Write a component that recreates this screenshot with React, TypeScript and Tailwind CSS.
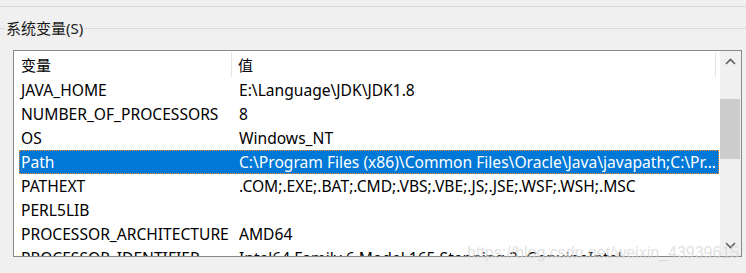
import { ReactNode } from 'react'

const rows: { name: string; value: string }[] = [
  { name: 'JAVA_HOME', value: 'E:\\Language\\JDK\\JDK1.8' },
  { name: 'NUMBER_OF_PROCESSORS', value: '8' },
  { name: 'OS', value: 'Windows_NT' },
  { name: 'Path', value: 'C:\\Program Files (x86)\\Common Files\\Oracle\\Java\\javapath;C:\\Pr...' },
  { name: 'PATHEXT', value: '.COM;.EXE;.BAT;.CMD;.VBS;.VBE;.JS;.JSE;.WSF;.WSH;.MSC' },
  { name: 'PERL5LIB', value: '' },
  { name: 'PROCESSOR_ARCHITECTURE', value: 'AMD64' },
  { name: 'PROCESSOR_IDENTIFIER', value: 'Intel64 Family 6 Model 165 Stepping 2, GenuineIntel' },
]

function Chevron({ down }: { down?: boolean }) {
  return (
    <svg width="11" height="7" viewBox="0 0 11 7" className="block">
      <polyline
        points={down ? '1,1 5.5,5.5 10,1' : '1,6 5.5,1.5 10,6'}
        fill="none"
        stroke="#606060"
        strokeWidth="1.6"
      />
    </svg>
  )
}

function Row({ name, value, selected }: { name: string; value: string; selected?: boolean }) {
  return (
    <div
      className={
        'flex h-[24px] shrink-0 items-center whitespace-nowrap text-[15.6px] leading-[20px] ' +
        (selected ? 'border border-dotted border-[#ff8728] bg-[#0078d7] text-white' : 'border border-transparent text-black')
      }
    >
      <div className="w-[219px] shrink-0 pl-[1px]">{name}</div>
      <div className="min-w-0 flex-1 overflow-hidden">{value}</div>
    </div>
  )
}

function ListHeader({ children }: { children: ReactNode }) {
  return <div className="flex h-[27px] shrink-0 items-center leading-[20px]">{children}</div>
}

export default function App() {
  return (
    <div
      className="relative h-[273px] w-[746px] overflow-hidden bg-[#f0f0f0] text-[15px] leading-none"
      style={{ fontFamily: '"Noto Sans", "Noto Sans CJK SC", sans-serif' }}
    >
      <div className="h-[6px]" />
      <div className="h-px bg-[#dadada]" />
      <div className="mt-[12px] flex h-[19px] items-center">
        <div className="h-px w-[5px] bg-[#dadada]" />
        <div className="px-[1px] leading-[19px] text-[#1a1a1a]">系统变量(S)</div>
        <div className="h-px flex-1 bg-[#dadada]" />
      </div>

      <div className="ml-[13px] mt-[12px] flex h-[207px] w-[729px] border border-[#828790] bg-white">
        <div className="flex w-[706px] flex-col overflow-hidden pl-[5px] pr-[1px]">
          <ListHeader>
            <div className="w-[212px] shrink-0 pl-[2px]">变量</div>
            <div className="h-[25px] w-px bg-[#e5e5e5]" />
            <div className="flex-1 pl-[6px]">值</div>
            <div className="h-[25px] w-px bg-[#e5e5e5]" />
            <div className="w-[3px]" />
          </ListHeader>
          {rows.map((r) => (
            <Row key={r.name} name={r.name} value={r.value} selected={r.name === 'Path'} />
          ))}
        </div>
        <div className="flex w-[21px] flex-col bg-[#f0f0f0]">
          <div className="flex h-[21px] items-center justify-center">
            <Chevron />
          </div>
          <div className="flex-1">
            <div className="mt-[27px] h-[60px] w-[20px] bg-[#cdcdcd]" />
          </div>
          <div className="flex h-[21px] items-center justify-center">
            <Chevron down />
          </div>
        </div>
      </div>

      <div
        className="absolute left-[467px] top-[244px] whitespace-nowrap text-[16px] leading-[18px] text-[#d4d4d4]/70"
        style={{ fontFamily: '"Liberation Sans", sans-serif' }}
      >
        https://blog.csdn.net/weixin_43939615
      </div>
    </div>
  )
}
